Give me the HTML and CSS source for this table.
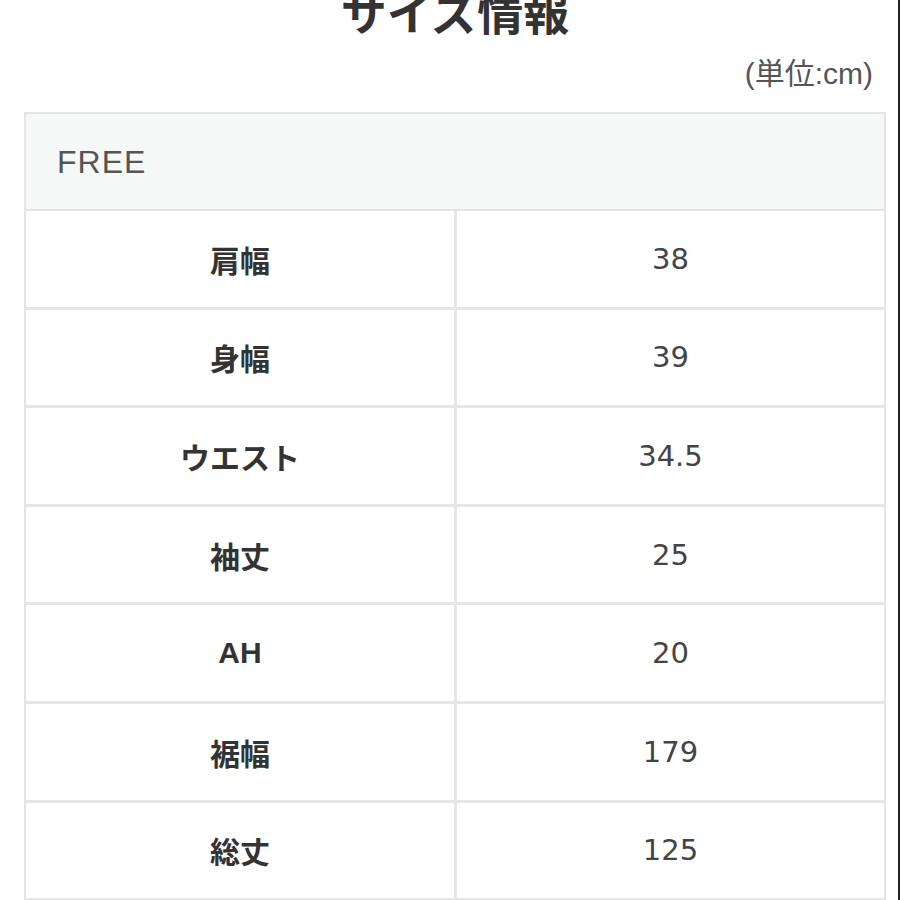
FILE: index.html
```
<!DOCTYPE html>
<html lang="ja">
<head>
<meta charset="utf-8">
<link rel="stylesheet" href="styles.css">
</head>
<body>
<div class="page">
  <h1 class="title">サイズ情報</h1>
  <div class="unit">(単位:cm)</div>
  <div class="table">
    <div class="head">FREE</div>
    <div class="row"><div class="label">肩幅</div><div class="val">38</div></div>
    <div class="row"><div class="label">身幅</div><div class="val">39</div></div>
    <div class="row"><div class="label">ウエスト</div><div class="val">34.5</div></div>
    <div class="row"><div class="label">袖丈</div><div class="val">25</div></div>
    <div class="row"><div class="label">AH</div><div class="val">20</div></div>
    <div class="row"><div class="label">裾幅</div><div class="val">179</div></div>
    <div class="row"><div class="label">総丈</div><div class="val">125</div></div>
  </div>
</div>
</body>
</html>
```
FILE: styles.css
```
html, body {
  margin: 0;
  padding: 0;
  background: #fff;
  overflow: hidden;
}
body {
  font-family: "Liberation Sans", "Noto Sans CJK JP", sans-serif;
  color: #333;
  border-right: 2px solid #222;
  height: 900px;
  box-sizing: border-box;
}
.page {
  padding: 0 12px 0 24px;
}
.title {
  margin: -14px 0 0 0;
  font-size: 46px;
  line-height: 56px;
  font-weight: bold;
  text-align: center;
  color: #333;
}
.unit {
  text-align: right;
  font-size: 30px;
  line-height: 34px;
  color: #555;
  margin-top: 15px;
  padding-right: 13px;
}
.table {
  margin-top: 21px;
  border: 2px solid #e4e4e4;
  border-bottom: none;
}
.head {
  height: 97px;
  box-sizing: border-box;
  background: #f6f8f8;
  font-size: 32px;
  letter-spacing: 1px;
  line-height: 97px;
  padding-left: 31px;
  color: #555;
  border-bottom: 2px solid #e4e4e4;
}
.row {
  display: grid;
  grid-template-columns: 431px 1fr;
  height: 98.6px;
  box-sizing: border-box;
  border-bottom: 3px solid #e6e6e6;
}
.label, .val {
  display: flex;
  align-items: center;
  justify-content: center;
  font-size: 30px;
}
.label {
  font-weight: bold;
  border-right: 3px solid #e6e6e6;
  color: #333;
}
.val {
  font-family: "DejaVu Sans", "Liberation Sans", sans-serif;
  font-size: 29px;
  color: #444;
}
```
